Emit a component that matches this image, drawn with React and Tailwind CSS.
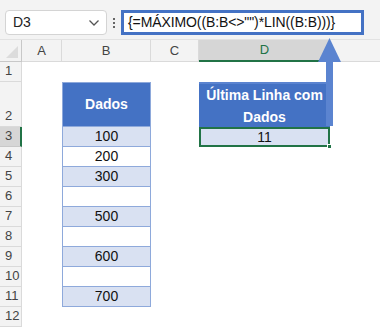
import React from "react";

const font = { fontFamily: '"Liberation Sans", Arial, sans-serif' };

const rowsData = [
  { n: "3", b: "100", shade: true },
  { n: "4", b: "200", shade: false },
  { n: "5", b: "300", shade: true },
  { n: "6", b: "", shade: false },
  { n: "7", b: "500", shade: true },
  { n: "8", b: "", shade: false },
  { n: "9", b: "600", shade: true },
  { n: "10", b: "", shade: false },
  { n: "11", b: "700", shade: true },
];

function RowHead({ children, h, active }) {
  return (
    <div
      className={
        "flex items-end pl-[5px] pb-[1px] border-b border-r text-[13px] text-[#444] " +
        (active
          ? "bg-[#d6d6d6] border-b-[#c8c8c8] border-r-2 border-r-[#217346]"
          : "bg-[#f3f3f3] border-[#dadada]")
      }
      style={{ height: h }}
    >
      {children}
    </div>
  );
}

export default function App() {
  return (
    <div className="relative w-[380px] h-[331px] overflow-hidden bg-white" style={font}>
      {/* top bar */}
      <div className="h-[40px] bg-[#f3f3f3] flex items-start pt-[10px] pl-[5px] border-b border-[#e2e2e2]">
        <div className="w-[102px] h-[25px] bg-white border border-[#d4d4d4] rounded-[4px] flex items-center justify-between pl-[7px] pr-[6px] text-[14px] text-[#222]">
          <span>D3</span>
          <svg width="12" height="8" viewBox="0 0 12 8">
            <path d="M1.5 1.5 L6 6 L10.5 1.5" fill="none" stroke="#555" strokeWidth="1.3" />
          </svg>
        </div>
        <div className="w-[14px] h-[25px] flex flex-col items-center justify-center gap-[2px]">
          <div className="w-[2px] h-[2px] bg-[#666]" />
          <div className="w-[2px] h-[2px] bg-[#666]" />
          <div className="w-[2px] h-[2px] bg-[#666]" />
        </div>
        <div className="w-[243px] h-[25px] bg-white border-[3px] border-[#4472c4] flex items-center pl-[4px] text-[14px] text-[#111] whitespace-nowrap tracking-[-0.1px]">
          {'{=MÁXIMO((B:B<>"")*LIN((B:B)))}'}
        </div>
      </div>

      {/* column headers */}
      <div className="grid grid-cols-[22px_40px_89px_48px_131px_1fr] h-[22px] bg-[#f3f3f3] text-[13px] text-[#444]">
        <div className="relative border-r border-b border-[#c8c8c8]">
          <svg className="absolute right-[3px] bottom-[3px]" width="12" height="12" viewBox="0 0 12 12">
            <path d="M12 0 L12 12 L0 12 Z" fill="#dcdcdc" />
          </svg>
        </div>
        <div className="flex items-center justify-center border-r border-b border-[#dadada]">A</div>
        <div className="flex items-center justify-center border-r border-b border-[#dadada]">B</div>
        <div className="flex items-center justify-center border-r border-b border-[#dadada]">C</div>
        <div className="flex items-center justify-center bg-[#d6d6d6] border-b-2 border-[#217346] text-[#217346]">D</div>
        <div className="border-b border-[#dadada]"></div>
      </div>

      {/* body */}
      <div className="grid grid-cols-[22px_40px_89px_48px_131px_1fr] text-[13px] text-[#111]">
        {/* row 1 */}
        <RowHead h={20}>1</RowHead>
        <div className="col-span-5 h-[20px]"></div>

        {/* row 2 */}
        <RowHead h={45}>2</RowHead>
        <div className="h-[45px]"></div>
        <div className="h-[45px] bg-[#4472c4] border border-[#8ea9db] flex items-center justify-center text-white font-bold text-[14px]">
          Dados
        </div>
        <div className="h-[45px]"></div>
        <div className="h-[45px] bg-[#4472c4] border-t-2 border-[#5b84d0] flex items-center justify-center text-center text-white font-bold text-[14px] leading-[22px] px-1">
          Última Linha com Dados
        </div>
        <div className="h-[45px]"></div>

        {rowsData.map((r, i) => (
          <React.Fragment key={r.n}>
            <RowHead h={20} active={i === 0}>{r.n}</RowHead>
            <div className="h-[20px]"></div>
            <div
              className={
                "h-[20px] border-x border-b border-[#8ea9db] flex items-center justify-center text-[14px] " +
                (r.shade ? "bg-[#d9e1f2]" : "bg-white")
              }
            >
              {r.b}
            </div>
            <div className="h-[20px]"></div>
            {i === 0 ? (
              <div className="relative h-[20px] bg-[#d9e1f2] border-2 border-[#217346] flex items-center justify-center text-[14px]">
                11
                <div className="absolute right-[-4px] bottom-[-4px] w-[5px] h-[5px] bg-[#217346] border border-white" />
              </div>
            ) : (
              <div className="h-[20px]"></div>
            )}
            <div className="h-[20px]"></div>
          </React.Fragment>
        ))}

        <RowHead h={20}>12</RowHead>
        <div className="col-span-5 h-[20px]"></div>
      </div>

      {/* arrow overlay */}
      <svg className="absolute left-0 top-0 pointer-events-none" width="380" height="331">
        <rect x="326" y="58" width="7" height="68" fill="#5b84d0" />
        <path d="M329.5 38 L341 62 L318 62 Z" fill="#5b84d0" />
      </svg>
    </div>
  );
}
